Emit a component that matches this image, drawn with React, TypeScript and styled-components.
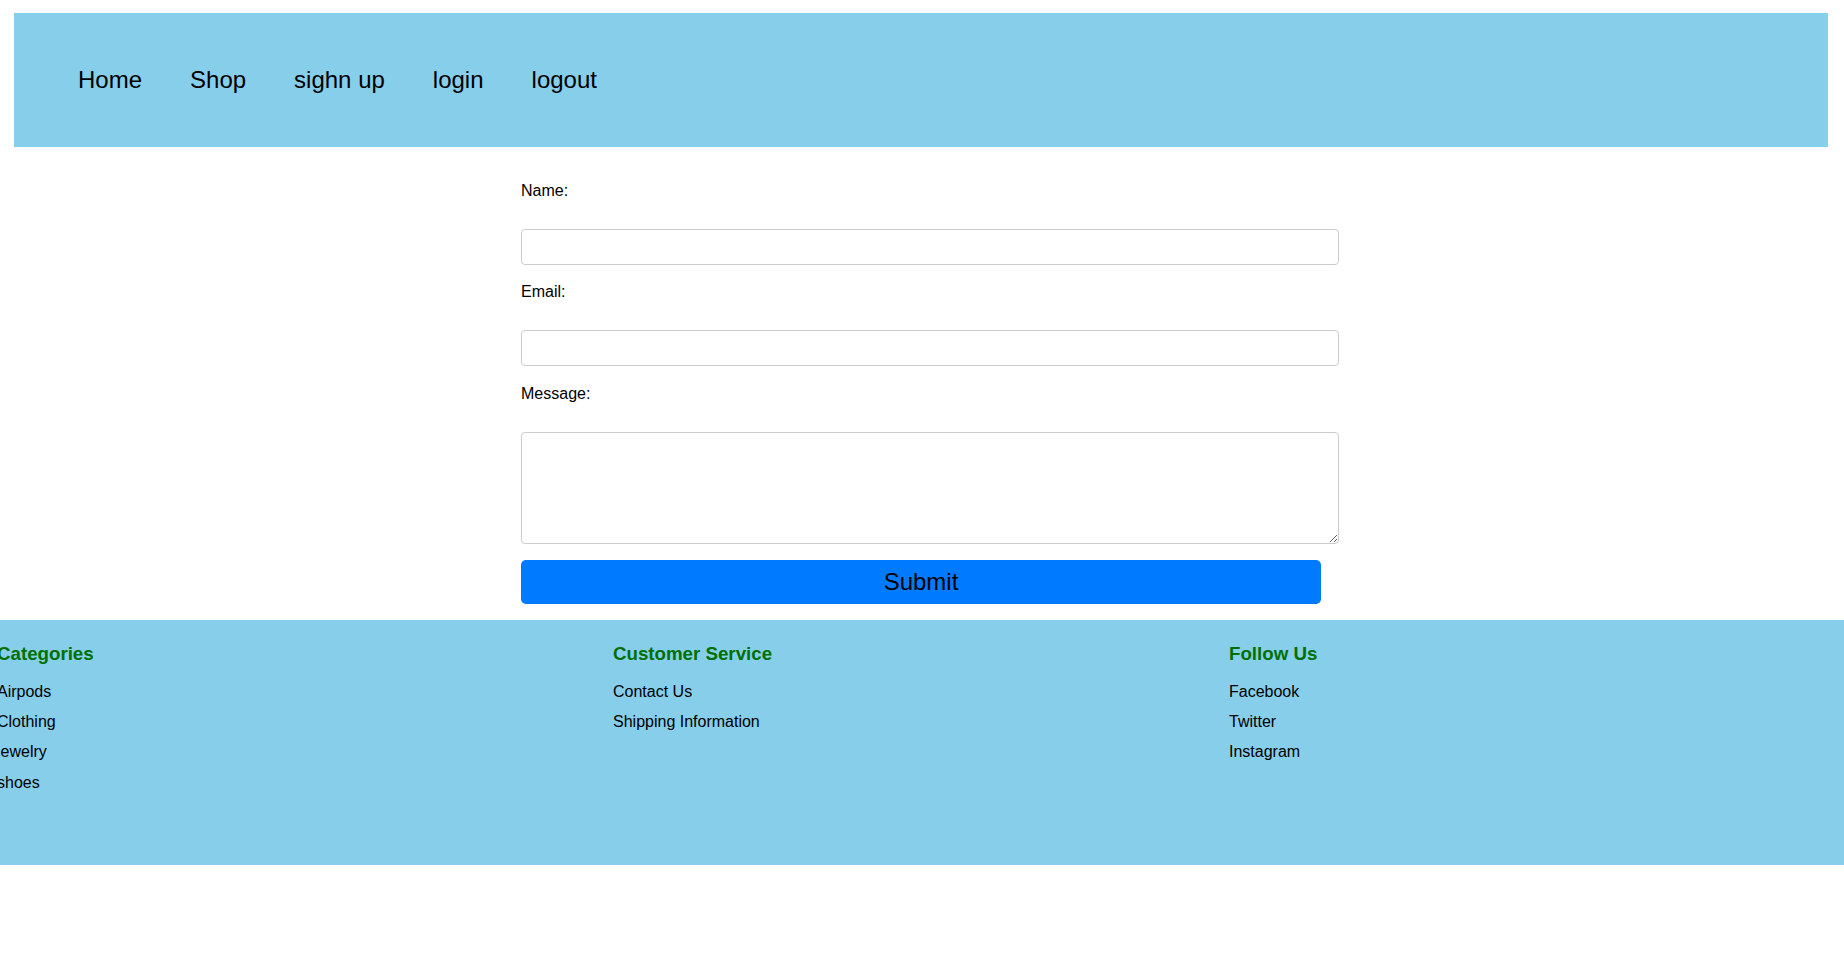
import React from "react";
import styled, { createGlobalStyle } from "styled-components";

const navLinks = ["Home", "Shop", "sighn up", "login", "logout"];

const footerColumns = [
  { title: "Categories", items: ["Airpods", "Clothing", "jewelry", "shoes"] },
  { title: "Customer Service", items: ["Contact Us", "Shipping Information"] },
  { title: "Follow Us", items: ["Facebook", "Twitter", "Instagram"] },
];

export default function App() {
  return (
    <>
      <GlobalStyle />
      <NavBar>
        <NavList>
          {navLinks.map((link) => (
            <li key={link}>
              <NavLink href="#">{link}</NavLink>
            </li>
          ))}
        </NavList>
      </NavBar>

      <ContactForm onSubmit={(e) => e.preventDefault()}>
        <FieldLabel htmlFor="name">Name:</FieldLabel>
        <TextInput id="name" type="text" />
        <FieldLabel htmlFor="email">Email:</FieldLabel>
        <TextInput id="email" type="email" />
        <FieldLabel htmlFor="message">Message:</FieldLabel>
        <MessageInput id="message" />
        <SubmitButton type="submit">Submit</SubmitButton>
      </ContactForm>

      <Footer>
        <FooterGrid>
          {footerColumns.map((col) => (
            <FooterColumn key={col.title}>
              <FooterTitle>{col.title}</FooterTitle>
              <FooterList>
                {col.items.map((item) => (
                  <FooterItem key={item}>{item}</FooterItem>
                ))}
              </FooterList>
            </FooterColumn>
          ))}
        </FooterGrid>
      </Footer>
    </>
  );
}

const GlobalStyle = createGlobalStyle`
  body {
    margin: 0;
    font-family: "Liberation Sans", Arial, sans-serif;
    background: #fff;
    color: #000;
    overflow-x: hidden;
  }
`;

const NavBar = styled.nav`
  display: flex;
  align-items: center;
  height: 134px;
  margin: 13px 16px 0 14px;
  background: #87ceeb;
`;

const NavList = styled.ul`
  display: flex;
  list-style: none;
  margin: 0;
  padding: 0 0 0 40px;
`;

const NavLink = styled.a`
  padding: 0 24px;
  font-size: 24px;
  color: #000;
  text-decoration: none;
`;

const ContactForm = styled.form`
  width: 800px;
  margin: 35px 0 0 calc(50% - 401px);
`;

const FieldLabel = styled.label`
  display: block;
  font-size: 16px;
  margin-bottom: 29px;
`;

const TextInput = styled.input`
  display: block;
  width: 100%;
  height: 18px;
  padding: 8px;
  margin: 0 0 18.3px;
  font-size: 16px;
  font-family: "Liberation Sans", Arial, sans-serif;
  border: 1px solid #ccc;
  border-radius: 4px;
  outline: none;
`;

const MessageInput = styled.textarea`
  display: block;
  width: 100%;
  height: 94.5px;
  padding: 8px;
  margin: 0 0 16px;
  font-size: 16px;
  font-family: "Liberation Sans", Arial, sans-serif;
  border: 1px solid #ccc;
  border-radius: 4px;
  outline: none;
`;

const SubmitButton = styled.button`
  display: block;
  width: 100%;
  height: 44px;
  margin: 0 0 16px;
  border: none;
  border-radius: 5px;
  background: #007bff;
  color: #000;
  font-size: 24px;
  font-family: "Liberation Sans", Arial, sans-serif;
  cursor: pointer;
`;

const Footer = styled.footer`
  height: 245px;
  background: #87ceeb;
  overflow: hidden;
`;

const FooterGrid = styled.div`
  display: grid;
  grid-template-columns: repeat(3, 616px);
  margin-left: -3px;
`;

const FooterColumn = styled.div`
  padding-top: 23px;
`;

const FooterTitle = styled.h3`
  margin: 0 0 17.5px;
  font-size: 18.72px;
  font-weight: bold;
  color: #007000;
`;

const FooterList = styled.ul`
  list-style: none;
  margin: 0;
  padding: 0;
`;

const FooterItem = styled.li`
  font-size: 16px;
  margin-bottom: 12.4px;
`;
